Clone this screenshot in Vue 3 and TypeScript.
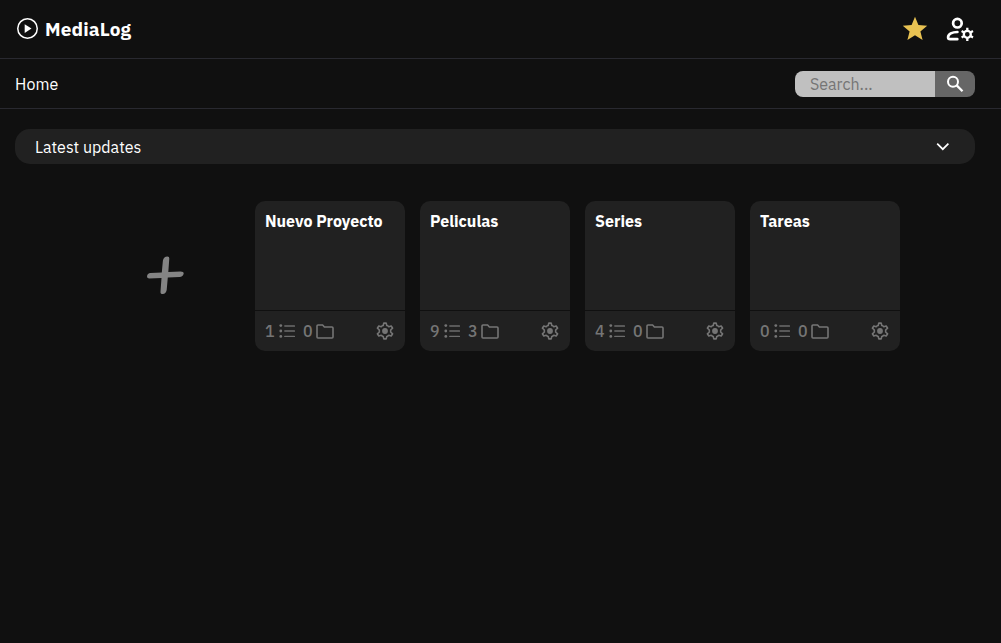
<script setup lang="ts">
import { ref } from 'vue'

interface Project {
  name: string
  items: number
  folders: number
}

const search = ref('')
const projects: Project[] = [
  { name: 'Nuevo Proyecto', items: 1, folders: 0 },
  { name: 'Peliculas', items: 9, folders: 3 },
  { name: 'Series', items: 4, folders: 0 },
  { name: 'Tareas', items: 0, folders: 0 },
]
</script>

<template>
  <div class="page">
    <header class="topbar">
      <div class="brand">
        <svg class="logo" viewBox="0 0 24 24">
          <circle cx="12.5" cy="11.5" r="9.75" fill="none" stroke="#fff" stroke-width="1.5" />
          <path d="M9.7 7.2v8.8l6.8-4.4z" fill="#fff" />
        </svg>
        <span class="brand-name">MediaLog</span>
      </div>
      <div class="actions">
        <svg class="star" viewBox="0 0 26 26">
          <path d="M13 .8l3.4 8.3 8.8.6-6.8 5.7 2.2 8.7-7.6-4.8-7.6 4.8 2.2-8.7L.8 9.7l8.8-.6z" fill="#e8c252" />
        </svg>
        <svg class="user" viewBox="0 0 28 26" fill="none" stroke="#fff">
          <circle cx="11.4" cy="7.2" r="4.3" stroke-width="2.7" />
          <path d="M11.4 16C6.2 16 2.1 18 2.1 21.3c0 1.2.8 1.9 2 1.9h7.2" stroke-width="2.7" stroke-linecap="round" />
          <circle cx="21.3" cy="18.3" r="3.5" stroke-width="2.3" />
          <path d="M21.3 14.7v-3M21.3 21.9v3M18.1 16.5l-2.5-1.4M24.5 20.1l2.5 1.4M24.5 16.5l2.5-1.4M18.1 20.1l-2.5 1.4" stroke-width="2.3" />
        </svg>
      </div>
    </header>

    <nav class="subbar">
      <span class="crumb">Home</span>
      <div class="search">
        <input v-model="search" class="search-input" type="text" placeholder="Search..." />
        <button class="search-button" aria-label="Search">
          <svg class="lens" viewBox="0 0 18 18" fill="none" stroke="#fff" stroke-width="2">
            <circle cx="7" cy="6.7" r="5" />
            <path d="M10.7 10.4l5.8 5.8" stroke-width="2.3" />
          </svg>
        </button>
      </div>
    </nav>

    <main class="content">
      <section class="updates">
        <span class="updates-title">Latest updates</span>
        <svg class="chevron" viewBox="0 0 14 8">
          <path d="M1.2 .7L6.8 6.2 12.4 .7" fill="none" stroke="#fff" stroke-width="1.7" />
        </svg>
      </section>

      <section class="grid">
        <div class="add">
          <svg class="plus" viewBox="0 0 40 40">
            <path
              d="M16.8 16.6L17.9 4.5Q18.8 .6 22.4.6Q24.5.8 24.3 2.5L23.3 16.1L35.5 15.5Q38.9 15.5 38.7 17.5Q38 20.9 34.5 21.1L22.8 21.6L21.7 34Q20.8 37.8 17.8 38.1Q15.2 38.1 15.5 35.5L16.5 22L4 22.4Q1.7 22.3 2 20.2Q2.6 17.3 5.3 17.1Z"
              fill="#848484"
            />
          </svg>
        </div>
        <article v-for="project in projects" :key="project.name" class="card">
          <div class="card-body">
            <span>{{ project.name }}</span>
          </div>
          <footer class="card-footer">
            <span class="count">{{ project.items }}</span>
            <svg class="list" viewBox="0 0 16 14">
              <g fill="#757575">
                <circle cx="1.8" cy="1.6" r="1.4" />
                <circle cx="1.8" cy="7" r="1.4" />
                <circle cx="1.8" cy="12.4" r="1.4" />
              </g>
              <path d="M5.8 2H15.4M5.8 7H15.4M5.8 12.4H15.4" stroke="#6c6c6c" stroke-width="1.4" stroke-linecap="round" />
            </svg>
            <span class="count folders">{{ project.folders }}</span>
            <svg class="folder" viewBox="0 0 18 15">
              <path
                d="M1 2a1 1 0 0 1 1-1h4.6l1.8 2H16a1 1 0 0 1 1 1v9a1 1 0 0 1-1 1H2a1 1 0 0 1-1-1z"
                fill="none"
                stroke="#757575"
                stroke-width="1.6"
              />
            </svg>
            <svg class="gear" viewBox="0 0 18 18">
              <path
                d="M7.8 1.1H10.2L10.8 3.5Q12 3.8 12.8 4.7L15.2 4L16.6 6.2L14.6 8Q14.9 9 14.6 10L16.6 11.8L15.2 14L12.8 13.3Q12 14.2 10.8 14.5L10.2 16.9H7.8L7.2 14.5Q6 14.2 5.2 13.3L2.8 14L1.4 11.8L3.4 10Q3.1 9 3.4 8L1.4 6.2L2.8 4L5.2 4.7Q6 3.8 7.2 3.5Z"
                fill="none"
                stroke="#757575"
                stroke-width="1.6"
                stroke-linejoin="round"
              />
              <circle cx="9" cy="9" r="2.9" fill="#757575" />
            </svg>
          </footer>
        </article>
      </section>
    </main>
  </div>
</template>

<style>
html,
body {
  margin: 0;
  background: #101010;
}
</style>

<style scoped>
.page {
  box-sizing: border-box;
  min-height: 643px;
  background: #101010;
  color: #fff;
  font: 16px/24px "IBM Plex Sans", Roboto, "Liberation Sans", sans-serif;
}
svg {
  display: block;
  flex: none;
}
span {
  white-space: nowrap;
}
.topbar,
.subbar {
  box-sizing: border-box;
  display: flex;
  align-items: center;
  justify-content: space-between;
  padding: 0 26px 0 15px;
  border-bottom: 1px solid #292930;
}
.topbar {
  height: 59px;
  padding-right: 27px;
}
.subbar {
  height: 50px;
}
.brand,
.actions {
  display: flex;
  align-items: center;
}
.brand {
  gap: 6px;
}
.logo {
  width: 24px;
  height: 24px;
}
.brand-name {
  font-size: 19px;
  font-weight: 700;
  letter-spacing: 0.13px;
}
.actions {
  gap: 18px;
}
.star {
  width: 26px;
  height: 26px;
}
.user {
  width: 28px;
  height: 26px;
}
.crumb {
  letter-spacing: 0.1px;
}
.search {
  display: flex;
  width: 180px;
  height: 26px;
  border-radius: 8px;
  overflow: hidden;
}
.search-input {
  box-sizing: border-box;
  width: 140px;
  height: 26px;
  padding: 0 15px;
  border: 0;
  outline: 0;
  background: #c0c0c0;
  color: #222;
  font: inherit;
}
.search-input::placeholder {
  color: #757575;
}
.search-button {
  display: flex;
  align-items: center;
  justify-content: center;
  width: 40px;
  height: 26px;
  padding: 0;
  border: 0;
  background: #666;
}
.lens {
  width: 18px;
  height: 18px;
}
.content {
  padding: 20px 26px 0 15px;
}
.updates {
  box-sizing: border-box;
  display: flex;
  align-items: center;
  justify-content: space-between;
  height: 35px;
  padding: 0 25.5px 0 20px;
  border-radius: 15px;
  background: #212121;
}
.chevron {
  width: 14px;
  height: 8px;
}
.grid {
  display: grid;
  grid-template-columns: repeat(5, 150px);
  justify-content: center;
  gap: 15px;
  margin-top: 37px;
}
.add {
  display: flex;
  align-items: center;
  justify-content: center;
}
.plus {
  width: 40px;
  height: 40px;
}
.card {
  display: flex;
  flex-direction: column;
  height: 150px;
  border-radius: 10px;
  background: #212121;
  overflow: hidden;
}
.card-body {
  flex: 1;
  padding: 8px 10px;
  font-weight: 700;
}
.card-footer {
  box-sizing: border-box;
  display: flex;
  align-items: center;
  height: 41px;
  padding: 0 11px 0 10px;
  border-top: 1px solid #101010;
  color: #757575;
  font-weight: 500;
}
.count {
  width: 10px;
}
.list {
  width: 16px;
  height: 14px;
  margin-left: 4px;
}
.folders {
  margin-left: 8px;
}
.folder {
  width: 18px;
  height: 15px;
  margin-left: 3px;
}
.gear {
  width: 18px;
  height: 18px;
  margin-left: auto;
}
</style>
